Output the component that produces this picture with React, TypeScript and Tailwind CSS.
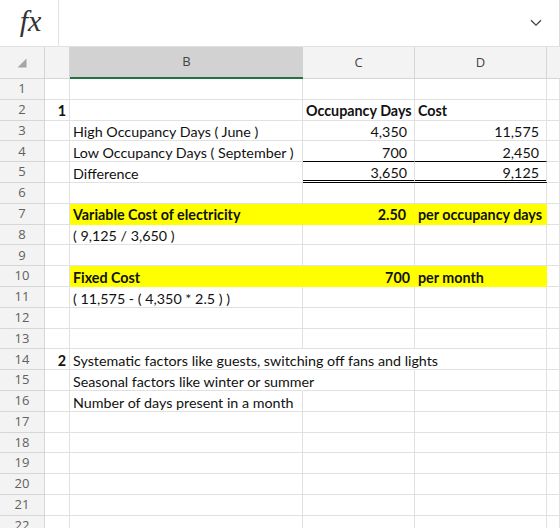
import React from "react";

const COLS = "grid grid-cols-[45px_25px_233px_112px_132px_1fr]";
const FONT = { fontFamily: "Lato, 'Liberation Sans', sans-serif" };
const UI = { fontFamily: "'Open Sans', 'Noto Sans', sans-serif" };

type C = {
  t?: string;
  right?: boolean;
  bold?: boolean;
  yellow?: boolean;
  over?: boolean;
  noR?: boolean;
  bb?: "single" | "double";
  pr?: string;
};

type Row = { A?: C; B?: C; C?: C; D?: C };

const rows: Row[] = [
  {},
  { A: { t: "1", bold: true, right: true }, C: { t: "Occupancy Days", bold: true }, D: { t: "Cost", bold: true } },
  { B: { t: "High Occupancy Days ( June )" }, C: { t: "4,350", right: true }, D: { t: "11,575", right: true } },
  { B: { t: "Low Occupancy Days ( September )" }, C: { t: "700", right: true, bb: "single" }, D: { t: "2,450", right: true, bb: "single" } },
  { B: { t: "Difference" }, C: { t: "3,650", right: true, bb: "double" }, D: { t: "9,125", right: true, bb: "double" } },
  {},
  {
    B: { t: "Variable Cost of electricity", bold: true, yellow: true },
    C: { t: "2.50", bold: true, right: true, yellow: true, pr: "pr-[8px]" },
    D: { t: "per occupancy days", bold: true, yellow: true },
  },
  { B: { t: "( 9,125 / 3,650 )" } },
  {},
  {
    B: { t: "Fixed Cost", bold: true, yellow: true },
    C: { t: "700", bold: true, right: true, yellow: true, pr: "pr-[4px]" },
    D: { t: "per month", bold: true, yellow: true },
  },
  { B: { t: "( 11,575 - ( 4,350 * 2.5 ) )" } },
  {},
  {},
  {
    A: { t: "2", bold: true, right: true },
    B: { t: "Systematic factors like guests, switching off fans and lights", over: true, noR: true },
    C: { noR: true },
  },
  { B: { t: "Seasonal factors like winter or summer", over: true, noR: true } },
  { B: { t: "Number of days present in a month" } },
  {}, {}, {}, {}, {}, {},
];

function Cell({ c, defPr }: { c?: C; defPr: string }) {
  const cell = c || {};
  let border = "border-r border-b border-[#e1e1e1]";
  if (cell.yellow) border = "border-r border-b border-[#ffff00]";
  if (cell.noR) border = border.replace("border-r ", "border-r border-r-transparent ");
  let bb = "";
  if (cell.bb === "single") bb = "border-b-black";
  if (cell.bb === "double") bb = "border-b-[3px] border-b-black border-double";
  return (
    <div
      className={`relative flex items-center pt-[3px] text-[14.3px] text-[#111] whitespace-nowrap ${border} ${bb} ${
        cell.yellow ? "bg-[#ffff00]" : ""
      } ${cell.right ? "justify-end " + (cell.pr || defPr) : "pl-[3px]"} ${cell.bold ? "font-bold" : ""} ${
        cell.over ? "overflow-visible z-10" : "overflow-hidden"
      }`}
      style={FONT}
    >
      {cell.t}
    </div>
  );
}

export default function App() {
  return (
    <div className="w-[560px] h-[528px] overflow-hidden bg-white select-none">
      {/* formula bar */}
      <div className="flex h-[47px] border-b border-[#e1e1e1]">
        <div className="w-[59px] border-r border-[#e1e1e1] flex items-center justify-center">
          <span
            className="italic text-[30px] text-[#333] leading-none -mt-[4px] ml-[3px]"
            style={{ fontFamily: "'Liberation Serif', serif" }}
          >
            fx
          </span>
        </div>
        <div className="flex-1 border-r border-[#dcdcdc] flex items-center justify-end pr-[17px]">
          <svg width="12" height="8" viewBox="0 0 12 8" fill="none">
            <path d="M1 1.2 L6 6.2 L11 1.2" stroke="#444" strokeWidth="1.3" />
          </svg>
        </div>
      </div>

      {/* column headers */}
      <div className={`${COLS} h-[32px]`} style={UI}>
        <div className="bg-[#f3f3f3] border-r border-b border-[#d6d6d6] flex items-center justify-center">
          <svg width="10" height="10" viewBox="0 0 10 10" className="mt-[1px]">
            <path d="M9.5 0.5 L9.5 9.5 L0.5 9.5 Z" fill="#a6a6a6" />
          </svg>
        </div>
        <div className="bg-[#f3f3f3] border-r border-b border-[#d6d6d6]" />
        <div className="bg-[#d2d2d2] border-b-2 border-[#217346] flex items-center justify-center text-[13px] text-[#444]">
          B
        </div>
        <div className="bg-[#f3f3f3] border-r border-b border-[#d6d6d6] flex items-center justify-center text-[13px] text-[#444]">
          C
        </div>
        <div className="bg-[#f3f3f3] border-r border-b border-[#d6d6d6] flex items-center justify-center text-[13px] text-[#444]">
          D
        </div>
        <div className="bg-[#f3f3f3] border-b border-[#d6d6d6]" />
      </div>

      {/* rows */}
      <div className={`${COLS} auto-rows-[20.8px]`}>
        {rows.map((r, i) => (
          <React.Fragment key={i}>
            <div
              className="bg-[#f3f3f3] border-r border-b border-[#d6d6d6] flex items-center justify-center text-[13px] text-[#616161]"
              style={UI}
            >
              {i + 1}
            </div>
            <Cell c={r.A} defPr="pr-[3px]" />
            <Cell c={r.B} defPr="pr-[4px]" />
            <Cell c={r.C} defPr="pr-[7px]" />
            <Cell c={r.D} defPr="pr-[7px]" />
            <Cell defPr="pr-[4px]" />
          </React.Fragment>
        ))}
      </div>
    </div>
  );
}
